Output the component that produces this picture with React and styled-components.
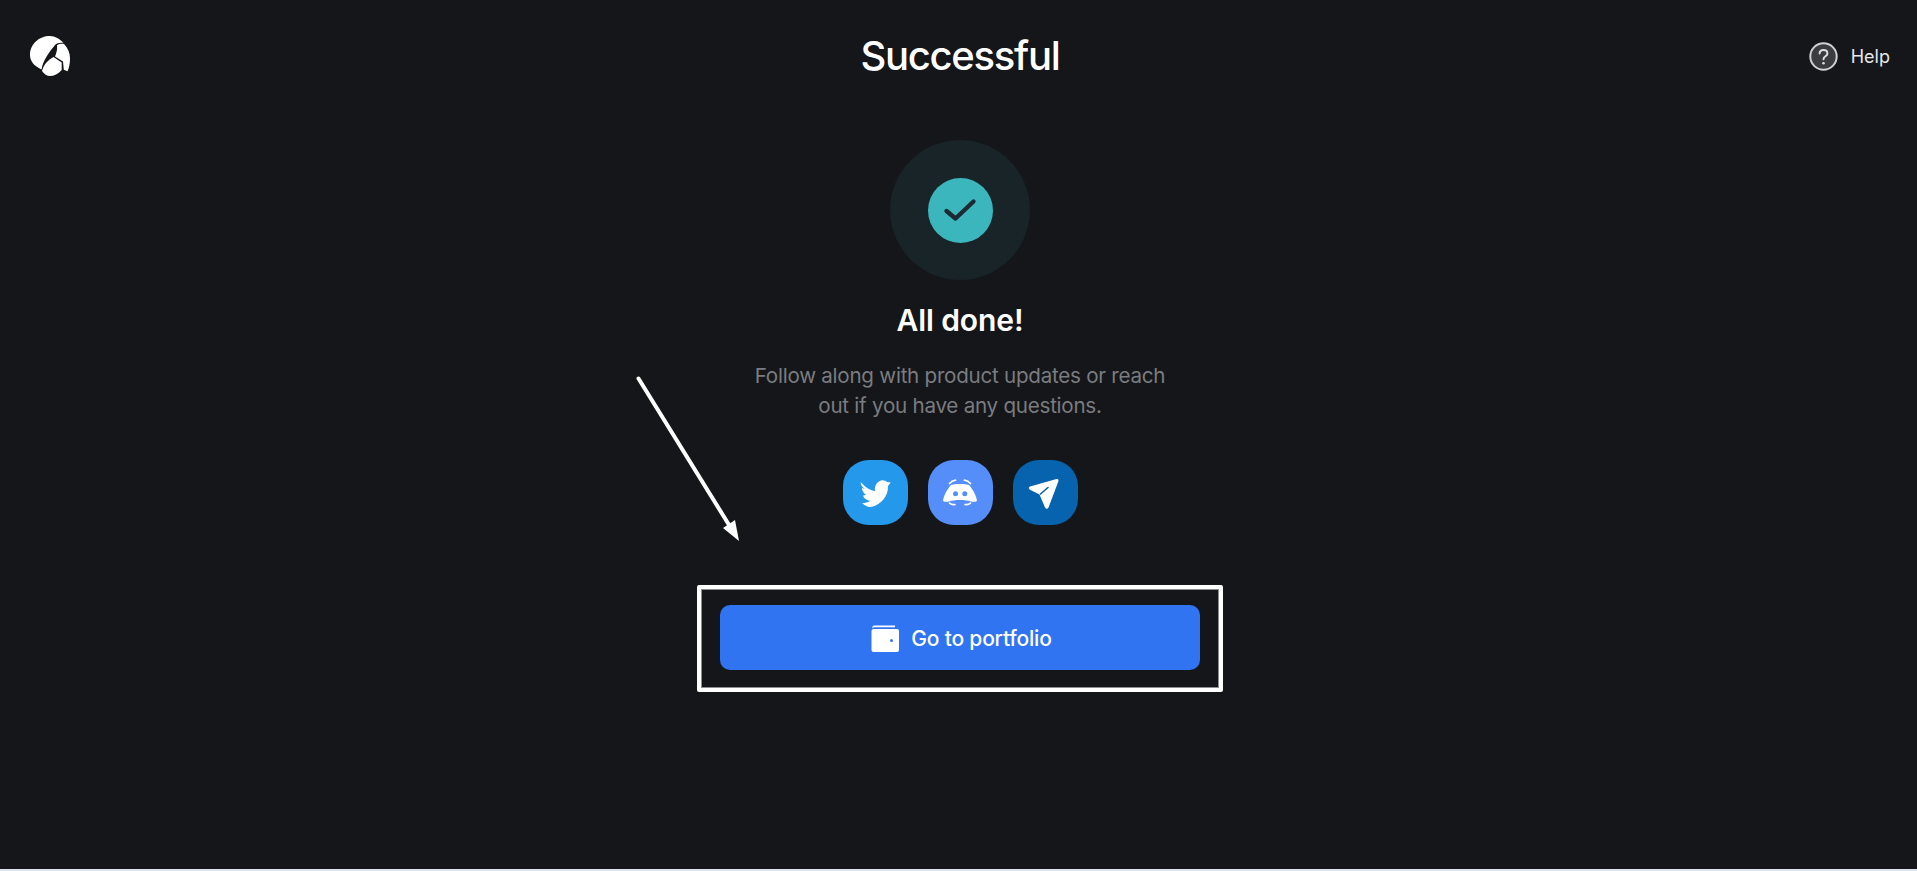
import styled, { createGlobalStyle } from "styled-components";

const GlobalStyle = createGlobalStyle`
  html, body { margin: 0; padding: 0; background: #14161a; }
  body { font-family: "Inter", "Noto Sans", sans-serif; }
`;

const Page = styled.div`
  position: relative;
  height: 871px;
  box-sizing: border-box;
  background: #14161a;
  border-bottom: 2px solid #dfe5ee;
  display: flex;
  flex-direction: column;
  overflow: hidden;
`;

const Header = styled.header`
  height: 112px;
  flex: none;
  box-sizing: border-box;
  padding: 0 27px 0 30px;
  display: grid;
  grid-template-columns: 1fr auto 1fr;
  align-items: center;
`;

const Logo = styled.svg`
  width: 40px;
  height: 40px;
`;

const Title = styled.h1`
  margin: 0;
  font-size: 40px;
  line-height: 48px;
  font-weight: 500;
  letter-spacing: -1.3px;
  color: #ffffff;
`;

const HelpLink = styled.div`
  justify-self: end;
  display: flex;
  align-items: center;
  gap: 13px;
  font-size: 18px;
  color: #e6e7e9;
`;

const Main = styled.main`
  display: flex;
  flex-direction: column;
  align-items: center;
  padding: 28px 0 0 3px;
`;

const Halo = styled.div`
  width: 140px;
  height: 140px;
  border-radius: 50%;
  background: #182428;
  display: flex;
  align-items: center;
  justify-content: center;
`;

const CheckDisc = styled.div`
  width: 65px;
  height: 65px;
  border-radius: 50%;
  background: #3bb6bd;
  display: flex;
  align-items: center;
  justify-content: center;
`;

const Heading = styled.h2`
  margin: 22px 0 0;
  font-size: 30px;
  line-height: 36px;
  font-weight: 600;
  letter-spacing: -0.1px;
  color: #ffffff;
`;

const Blurb = styled.p`
  margin: 23px 0 0;
  width: 430px;
  font-size: 20.6px;
  line-height: 30px;
  letter-spacing: -0.25px;
  text-align: center;
  color: #7b7c80;
`;

const Socials = styled.div`
  margin-top: 39px;
  display: flex;
  gap: 20px;
`;

const SocialIcon = styled.a`
  width: 65px;
  height: 65px;
  border-radius: 26px;
  background: ${(props) => props.$bg};
  display: flex;
  align-items: center;
  justify-content: center;
`;

const Callout = styled.div`
  margin-top: 60px;
  padding: 16px 19px 18px;
  border: 4px solid #ffffff;
  border-radius: 2px;
  outline: 1px solid #8d8e90;
  outline-offset: -5px;
`;

const PortfolioButton = styled.button`
  width: 480px;
  height: 65px;
  padding: 1px 0 0 3px;
  border: 0;
  border-radius: 10px;
  background: #3174f1;
  color: #ffffff;
  font-family: inherit;
  font-size: 21px;
  font-weight: 500;
  letter-spacing: -0.2px;
  display: flex;
  align-items: center;
  justify-content: center;
  gap: 12px;
`;

const Arrow = styled.svg`
  position: absolute;
  left: 630px;
  top: 370px;
  width: 120px;
  height: 180px;
`;

const App = () => {
  return (
    <Page>
      <GlobalStyle />
      <Header>
        <Logo viewBox="0 0 40 40">
          <path d="M11.5 33.5C4 30 0 25 0 19C0 8 9 0 20 0C25 0 30 3 33.5 7C30 6.5 27 7 25 9C20 15 13 24 11.5 33.5Z" fill="#fff" />
          <path d="M27 9.2C29 8 31.5 7.6 34 8C38 12 40 17 40 22.5C40 28 39 32 37.5 35.2L33.8 33.8L33 25.5L25 20.4C26.5 17 27.5 13 27 9.2Z" fill="#fff" />
          <path d="M12 35C14 28 18 24 23.5 21L31.7 26.5L31.7 34C28 38 24 40 20 40C17 40 14 38 12 35Z" fill="#fff" />
        </Logo>
        <Title>Successful</Title>
        <HelpLink>
          <svg width="29" height="29" viewBox="0 0 29 29">
            <circle cx="14.5" cy="14.5" r="13.2" fill="#3a3c40" stroke="#cfd0d2" strokeWidth="2" />
            <path d="M10.6 11.6c0-2.2 1.7-3.6 3.9-3.6s3.9 1.4 3.9 3.4c0 2.9-3.9 2.9-3.9 5.8" fill="none" stroke="#dcdddf" strokeWidth="2" strokeLinecap="round" />
            <circle cx="14.5" cy="21.2" r="1.3" fill="#dcdddf" />
          </svg>
          Help
        </HelpLink>
      </Header>
      <Main>
        <Halo>
          <CheckDisc>
            <svg width="36" height="26" viewBox="0 0 36 26">
              <path d="M4.5 14 L13.5 21.5 L31.5 4.5" fill="none" stroke="#1c2a33" strokeWidth="4.4" strokeLinecap="round" strokeLinejoin="round" />
            </svg>
          </CheckDisc>
        </Halo>
        <Heading>All done!</Heading>
        <Blurb>Follow along with product updates or reach out if you have any questions.</Blurb>
        <Socials>
          <SocialIcon $bg="#2498ea">
            <svg width="42" height="42" viewBox="0 0 42 42">
              <path d="M6.7 10C11 15 16 18.5 21 19C20 13.5 24 8.3 28.5 8.3C30.5 8.3 32 9 33 10L36.7 10.5L34 14C34.5 24 27 33 17 35C13.5 35.5 10.5 33 8 31C11 31 14 30.5 16 29C12 28 9.5 26 9 23.5L12 23C9 21 8 18 8 16L11 17C8 15 6.5 12.5 6.7 10Z" fill="#fff" />
            </svg>
          </SocialIcon>
          <SocialIcon $bg="#558ef8">
            <svg width="42" height="42" viewBox="0 0 42 42">
              <path d="M12 13C17 11.8 25 11.8 30 13C34 17.5 37.5 24 38 29C36 30 33.5 30 32 29.5C26.5 27.5 15.5 27.5 10 29.5C8.5 30 6 30 4 29C4.5 24 8 17.5 12 13Z" fill="#fff" />
              <path d="M10.5 11.5C12 9.8 14 8.6 16.5 8.2M31.5 11.5C30 9.8 28 8.6 25.5 8.2M10.5 31C12 32.5 14 33 16 32.5M31.5 31C30 32.5 28 33 26 32.5" fill="none" stroke="#fff" strokeWidth="1.7" strokeLinecap="round" />
              <circle cx="16.5" cy="21.8" r="2.5" fill="#558ef8" />
              <circle cx="25.8" cy="21.8" r="2.5" fill="#558ef8" />
            </svg>
          </SocialIcon>
          <SocialIcon $bg="#0863ae">
            <svg width="42" height="42" viewBox="0 0 42 42">
              <path d="M32.5 7L6 14.5Q3.5 16 6 17.7L15.5 22.5L21 35.5Q23 38 24.5 35.5L34.5 9Q34.8 6.5 32.5 7Z" fill="#fff" />
              <path d="M16.5 22L24 15.5" stroke="#0863ae" strokeWidth="1.6" strokeLinecap="round" />
            </svg>
          </SocialIcon>
        </Socials>
        <Callout>
          <PortfolioButton>
            <svg width="28" height="27" viewBox="0 0 28 27">
              <path d="M3 0.5 H24 V2.2 H3.5 C2.5 2.2 1.8 2.6 1.2 3.2 C1.4 1.4 1.9 0.5 3 0.5Z" fill="#fff" />
              <path d="M2.5 4 H26 Q28 4 28 6 V25 Q28 27 26 27 H2.5 Q0.5 27 0.5 25 V6 Q0.5 4 2.5 4Z" fill="#fff" />
              <circle cx="20.5" cy="15.5" r="1.5" fill="#3174f1" />
            </svg>
            Go to portfolio
          </PortfolioButton>
        </Callout>
      </Main>
      <Arrow viewBox="0 0 120 180">
        <path d="M8.5 8.5 L104 163" stroke="#fff" strokeWidth="4" strokeLinecap="round" fill="none" />
        <path d="M109 171 L93 158 L105 150 Z" fill="#fff" />
      </Arrow>
    </Page>
  );
};

export default App;
